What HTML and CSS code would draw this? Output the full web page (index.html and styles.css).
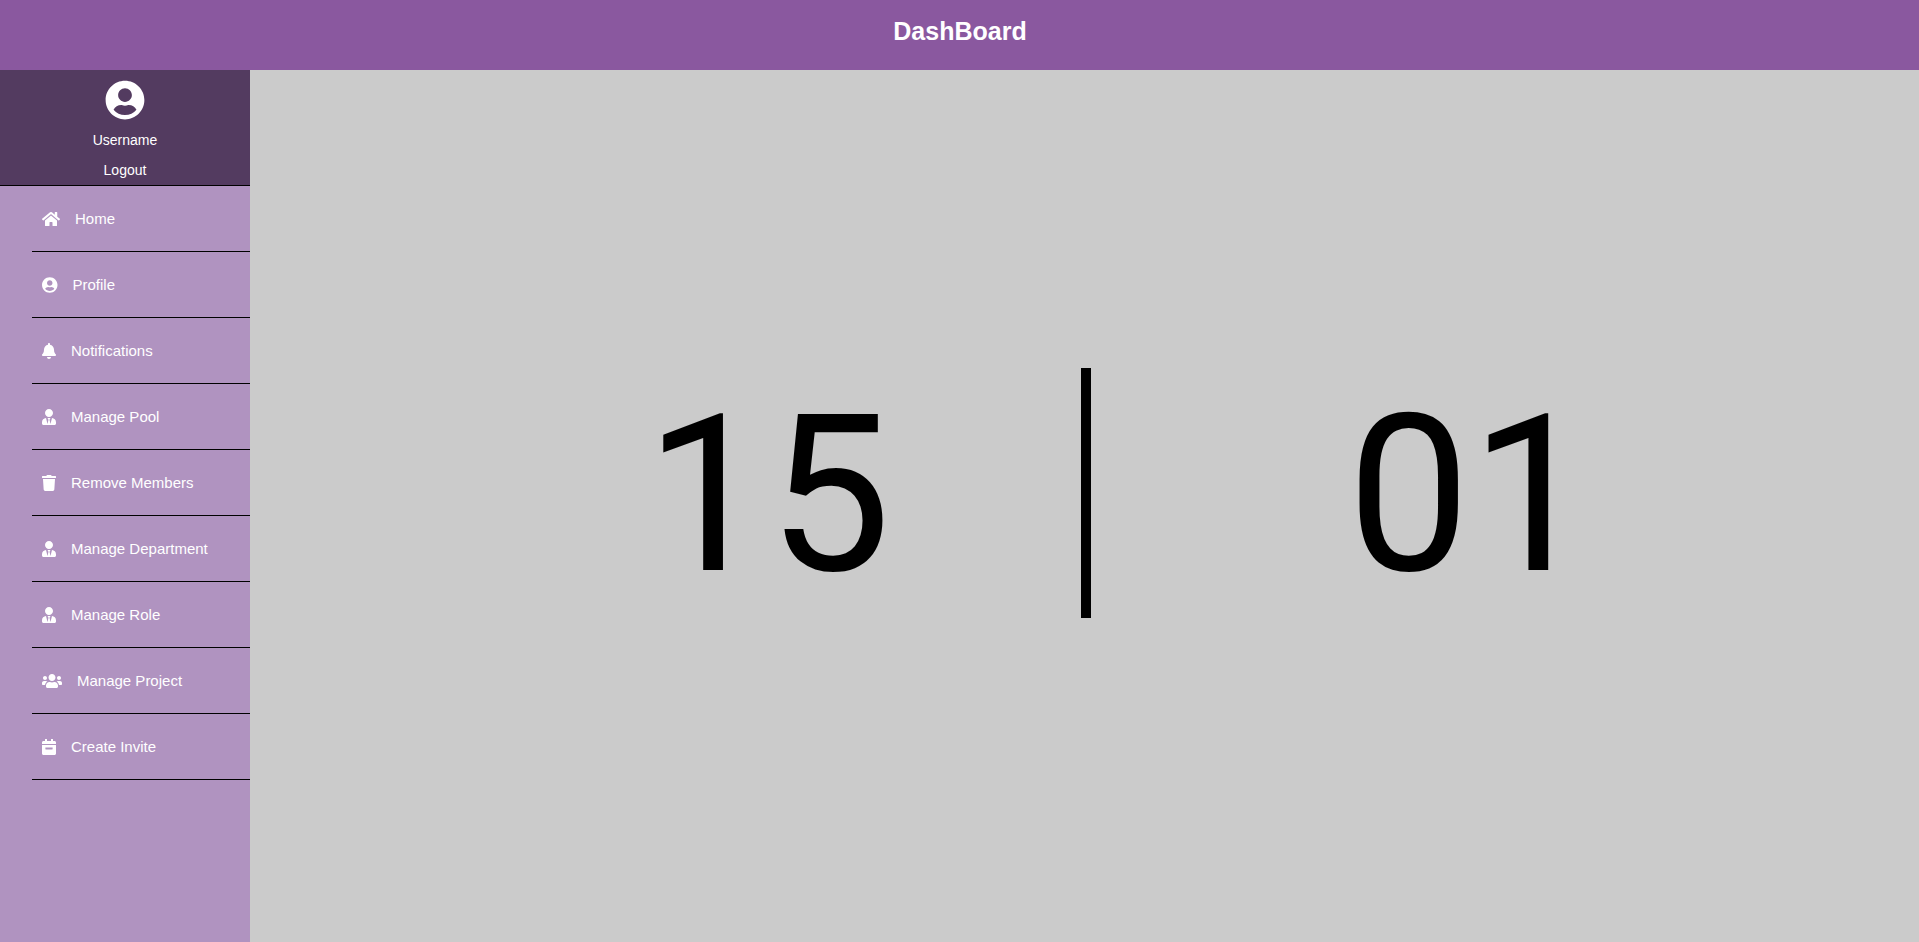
FILE: index.html
```html
<!DOCTYPE html>
<html lang="en">
<head>
    <meta charset="UTF-8">
    <meta name="viewport" content="width=device-width, initial-scale=1.0">
    <title>DashBoard</title>
    <link rel="stylesheet" href="styles.css">
</head>
<body>

<header class="top-bar">
    <h1>DashBoard</h1>
</header>

<div class="wrapper">
    <aside class="sidebar">
        <!-- Profile block -->
        <div class="profile">
            <svg class="profile-icon" viewBox="0 0 496 512"><path d="M248 8C111 8 0 119 0 256s111 248 248 248 248-111 248-248S385 8 248 8zm0 96c48.6 0 88 39.4 88 88s-39.4 88-88 88-88-39.4-88-88 39.4-88 88-88zm0 344c-58.7 0-111.3-26.6-146.5-68.2 18.8-35.4 55.6-59.8 98.5-59.8 2.4 0 4.8.4 7.1 1.1 13 4.2 26.6 6.9 40.9 6.9 14.3 0 28-2.7 40.9-6.9 2.3-.7 4.7-1.1 7.1-1.1 42.9 0 79.7 24.4 98.5 59.8C359.3 421.4 306.7 448 248 448z"/></svg>
            <a class="profile-link" href="#">Username</a>
            <a class="profile-link" href="#">Logout</a>
        </div>

        <!-- Menu -->
        <nav class="menu">
            <a class="menu-item" href="#">
                <svg class="menu-icon" viewBox="0 0 576 512"><path d="M280.37 148.26L96 300.11V464a16 16 0 0 0 16 16l112.06-.29a16 16 0 0 0 15.92-16V368a16 16 0 0 1 16-16h64a16 16 0 0 1 16 16v95.64a16 16 0 0 0 16 16.05L464 480a16 16 0 0 0 16-16V300L295.67 148.26a12.19 12.19 0 0 0-15.3 0zM571.6 251.47L488 182.56V44.05a12 12 0 0 0-12-12h-56a12 12 0 0 0-12 12v72.61L318.47 43a48 48 0 0 0-61 0L4.34 251.47a12 12 0 0 0-1.6 16.9l25.5 31A12 12 0 0 0 45.15 301l235.22-193.74a12.19 12.19 0 0 1 15.3 0L530.9 301a12 12 0 0 0 16.9-1.6l25.5-31a12 12 0 0 0-1.7-16.93z"/></svg>
                Home
            </a>
            <a class="menu-item" href="#">
                <svg class="menu-icon" viewBox="0 0 496 512"><path d="M248 8C111 8 0 119 0 256s111 248 248 248 248-111 248-248S385 8 248 8zm0 96c48.6 0 88 39.4 88 88s-39.4 88-88 88-88-39.4-88-88 39.4-88 88-88zm0 344c-58.7 0-111.3-26.6-146.5-68.2 18.8-35.4 55.6-59.8 98.5-59.8 2.4 0 4.8.4 7.1 1.1 13 4.2 26.6 6.9 40.9 6.9 14.3 0 28-2.7 40.9-6.9 2.3-.7 4.7-1.1 7.1-1.1 42.9 0 79.7 24.4 98.5 59.8C359.3 421.4 306.7 448 248 448z"/></svg>
                Profile
            </a>
            <a class="menu-item" href="#">
                <svg class="menu-icon" viewBox="0 0 448 512"><path d="M224 512c35.32 0 63.97-28.65 63.97-64H160.03c0 35.35 28.65 64 63.97 64zm215.39-149.71c-19.32-20.76-55.47-51.99-55.47-154.29 0-77.7-54.48-139.9-127.94-155.16V32c0-17.67-14.32-32-31.98-32s-31.98 14.33-31.98 32v20.84C118.56 68.1 64.08 130.3 64.08 208c0 102.3-36.15 133.53-55.47 154.29-6 6.45-8.66 14.16-8.61 21.71.11 16.4 12.98 32 32.1 32h383.8c19.12 0 32-15.6 32.1-32 .05-7.55-2.61-15.27-8.61-21.71z"/></svg>
                Notifications
            </a>
            <a class="menu-item" href="#">
                <svg class="menu-icon" viewBox="0 0 448 512"><path d="M224 256c70.7 0 128-57.3 128-128S294.7 0 224 0 96 57.3 96 128s57.3 128 128 128zm95.8 32.6L272 480l-32-136 32-56h-96l32 56-32 136-47.8-191.4C56.9 292 0 350.3 0 422.4V464c0 26.5 21.5 48 48 48h352c26.5 0 48-21.5 48-48v-41.6c0-72.1-56.9-130.4-128.2-133.8z"/></svg>
                Manage Pool
            </a>
            <a class="menu-item" href="#">
                <svg class="menu-icon" viewBox="0 0 448 512"><path d="M432 32H312l-9.4-18.7A24 24 0 0 0 281.1 0H166.8a23.72 23.72 0 0 0-21.4 13.3L136 32H16A16 16 0 0 0 0 48v32a16 16 0 0 0 16 16h416a16 16 0 0 0 16-16V48a16 16 0 0 0-16-16zM53.2 467a48 48 0 0 0 47.9 45h245.8a48 48 0 0 0 47.9-45L416 128H32z"/></svg>
                Remove Members
            </a>
            <a class="menu-item" href="#">
                <svg class="menu-icon" viewBox="0 0 448 512"><path d="M224 256c70.7 0 128-57.3 128-128S294.7 0 224 0 96 57.3 96 128s57.3 128 128 128zm95.8 32.6L272 480l-32-136 32-56h-96l32 56-32 136-47.8-191.4C56.9 292 0 350.3 0 422.4V464c0 26.5 21.5 48 48 48h352c26.5 0 48-21.5 48-48v-41.6c0-72.1-56.9-130.4-128.2-133.8z"/></svg>
                Manage Department
            </a>
            <a class="menu-item" href="#">
                <svg class="menu-icon" viewBox="0 0 448 512"><path d="M224 256c70.7 0 128-57.3 128-128S294.7 0 224 0 96 57.3 96 128s57.3 128 128 128zm95.8 32.6L272 480l-32-136 32-56h-96l32 56-32 136-47.8-191.4C56.9 292 0 350.3 0 422.4V464c0 26.5 21.5 48 48 48h352c26.5 0 48-21.5 48-48v-41.6c0-72.1-56.9-130.4-128.2-133.8z"/></svg>
                Manage Role
            </a>
            <a class="menu-item" href="#">
                <svg class="menu-icon" viewBox="0 0 640 512"><path d="M96 224c35.3 0 64-28.7 64-64s-28.7-64-64-64-64 28.7-64 64 28.7 64 64 64zm448 0c35.3 0 64-28.7 64-64s-28.7-64-64-64-64 28.7-64 64 28.7 64 64 64zm32 32h-64c-17.6 0-33.5 7.1-45.1 18.6 40.3 22.1 68.9 62 75.1 109.4h66c17.7 0 32-14.3 32-32v-32c0-35.3-28.7-64-64-64zm-256 0c61.9 0 112-50.1 112-112S381.9 32 320 32 208 82.1 208 144s50.1 112 112 112zm76.8 32h-8.3c-20.8 10-43.9 16-68.5 16s-47.6-6-68.5-16h-8.3C179.6 288 128 339.6 128 403.2V432c0 26.5 21.5 48 48 48h288c26.5 0 48-21.5 48-48v-28.8c0-63.6-51.6-115.2-115.2-115.2zm-223.7-13.4C161.5 263.1 145.6 256 128 256H64c-35.3 0-64 28.7-64 64v32c0 17.7 14.3 32 32 32h65.9c6.3-47.4 34.9-87.3 75.2-109.4z"/></svg>
                Manage Project
            </a>
            <a class="menu-item" href="#">
                <svg class="menu-icon" viewBox="0 0 448 512"><path d="M436 160H12c-6.6 0-12-5.4-12-12v-36c0-26.5 21.5-48 48-48h48V12c0-6.6 5.4-12 12-12h40c6.6 0 12 5.4 12 12v52h128V12c0-6.6 5.4-12 12-12h40c6.6 0 12 5.4 12 12v52h48c26.5 0 48 21.5 48 48v36c0 6.6-5.4 12-12 12zM12 192h424c6.6 0 12 5.4 12 12v260c0 26.5-21.5 48-48 48H48c-26.5 0-48-21.5-48-48V204c0-6.6 5.4-12 12-12zm316 140c6.6 0 12-5.4 12-12v-40c0-6.6-5.4-12-12-12H120c-6.6 0-12 5.4-12 12v40c0 6.6 5.4 12 12 12h208z"/></svg>
                Create Invite
            </a>
        </nav>
    </aside>

    <main class="content">
        <div class="count">15</div>
        <div class="divider"></div>
        <div class="count count-right">01</div>
    </main>
</div>

</body>
</html>
```

FILE: styles.css
```css
body {
    font-family: 'Liberation Sans', Arial, sans-serif;
    margin: 0;
    padding: 0;
    height: 942px;
    overflow: hidden;
    display: flex;
    flex-direction: column;
}

.top-bar {
    background-color: #8a589f;
    height: 70px;
    flex-shrink: 0;
    display: flex;
    align-items: flex-start;
    justify-content: center;
}

.top-bar h1 {
    color: #fff;
    font-size: 25px;
    line-height: 30px;
    font-weight: bold;
    margin: 16px 0 0 1px;
}

.wrapper {
    display: flex;
    flex: 1;
}

.sidebar {
    width: 250px;
    flex-shrink: 0;
    background-color: #b093c0;
}

.profile {
    background-color: #533b60;
    padding-top: 10px;
    height: 105px;
    border-bottom: 1px solid #000;
    display: flex;
    flex-direction: column;
    align-items: center;
}

.profile-icon {
    width: 40px;
    height: 40px;
    fill: #fff;
    margin-bottom: 5px;
}

.profile-link {
    color: #fff;
    font-size: 14px;
    line-height: 30px;
    text-decoration: none;
}

.menu-item {
    display: flex;
    align-items: center;
    gap: 15px;
    height: 65px;
    margin-left: 32px;
    padding-left: 10px;
    border-bottom: 1px solid #000;
    color: #fff;
    font-size: 15px;
    text-decoration: none;
}

.menu-icon {
    height: 16px;
    width: auto;
    fill: #fff;
    flex-shrink: 0;
}

.content {
    flex: 1;
    background-color: #cbcbcb;
    display: flex;
    align-items: flex-start;
    padding-top: 298px;
    padding-left: 395px;
}

/* Roboto: its 1 has no foot, like the reference */
.count {
    font-family: Roboto, 'Liberation Sans', sans-serif;
    font-size: 219px;
    line-height: 255px;
    color: #000;
    margin-right: 190px;
}

.count-right {
    margin-right: 0;
    margin-left: 256px;
}

.divider {
    width: 10px;
    height: 250px;
    background-color: #000;
}
```
